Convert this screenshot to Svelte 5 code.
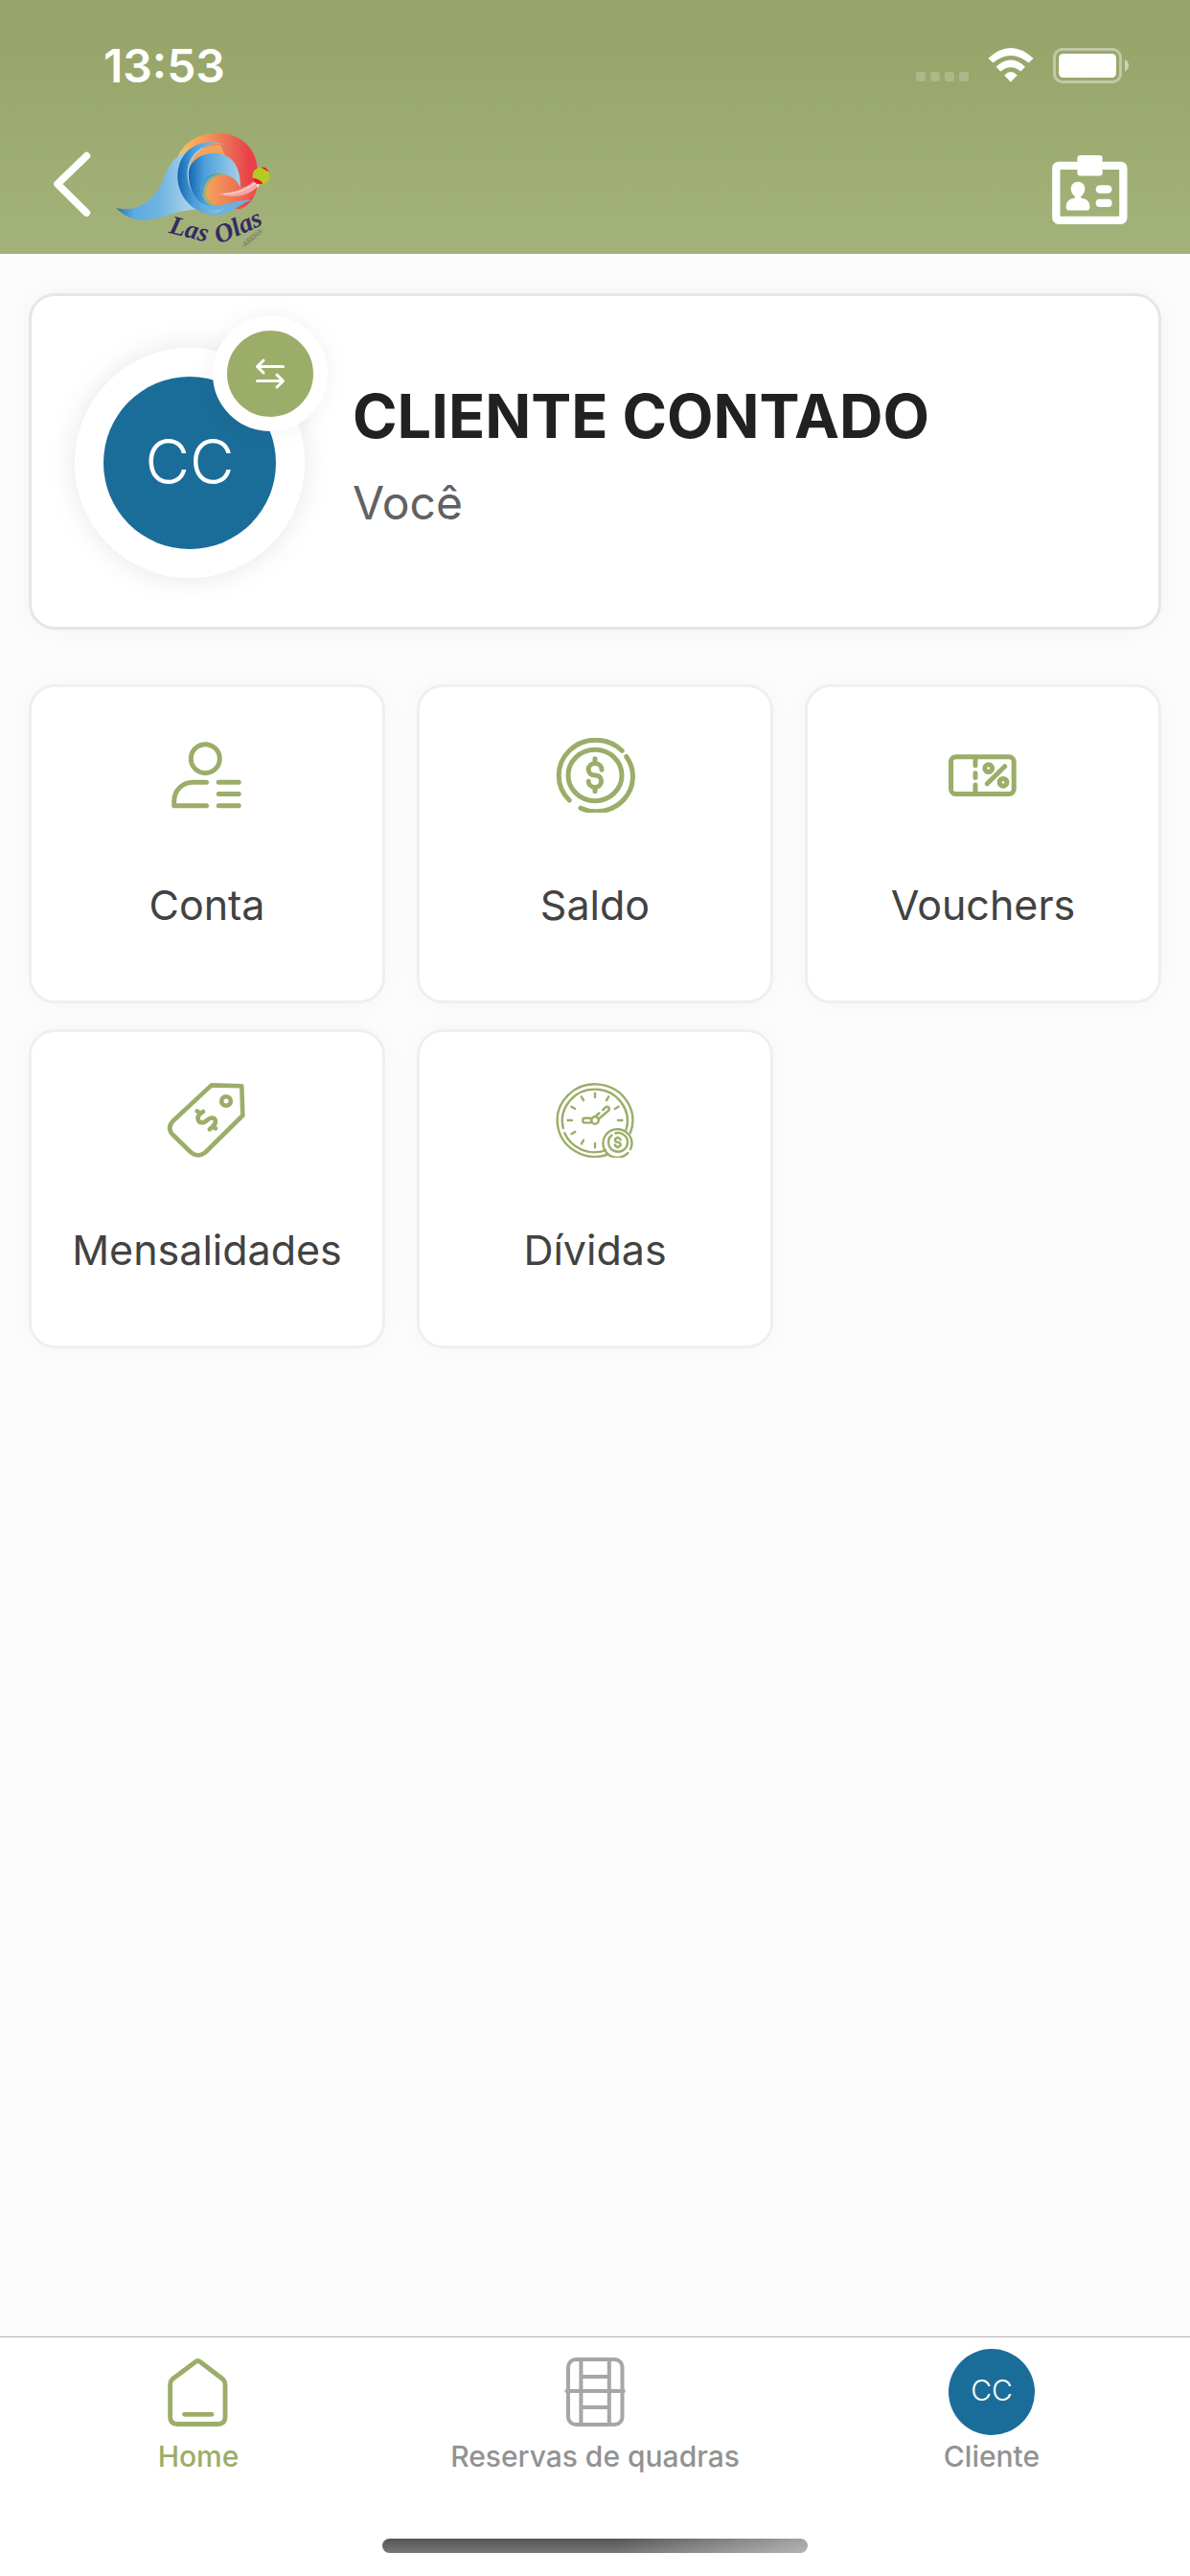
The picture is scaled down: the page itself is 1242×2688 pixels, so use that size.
<script>
  const tiles = [
    { id: 'account', label: 'Conta' },
    { id: 'balance', label: 'Saldo' },
    { id: 'voucher', label: 'Vouchers' },
    { id: 'monthly', label: 'Mensalidades' },
    { id: 'debts', label: 'Dívidas' },
  ];

  const tabs = [
    { id: 'home', label: 'Home' },
    { id: 'courts', label: 'Reservas de quadras' },
    { id: 'client', label: 'Cliente' },
  ];

  // the coin covers the marks at 4 and 5 o'clock
  const ticks = [0, 30, 60, 90, 180, 210, 240, 270, 300, 330];

  let active = 'home';
</script>

<div class="app">
  <header>
    <div class="status">
      <span class="time">13:53</span>
      <div class="indicators">
        <div class="signal"><i></i><i></i><i></i><i></i></div>
        <svg width="48" height="36" viewBox="329 147 143 109" fill="#fff">
          <path d="M329 180Q400 114 472 180L457 194Q400 148 344 194Z" />
          <path d="M354 207Q400 163 446 207L432 221Q400 195 368 221Z" />
          <path d="M380 233Q400 213 421 233L400 255Z" />
        </svg>
        <svg width="79" height="37" viewBox="531 147 237 111">
          <rect x="535.5" y="151.5" width="207" height="102" rx="25" fill="none" stroke="#fff" stroke-opacity=".4" stroke-width="9" />
          <rect x="549" y="165" width="180" height="75" rx="14" fill="#fff" />
          <path d="M756 183Q768 190 768 202T756 221Z" fill="#fff" fill-opacity=".5" />
        </svg>
      </div>
    </div>

    <div class="nav">
      <button class="back" aria-label="Voltar">
        <svg width="40" height="68" viewBox="165 473 120 204">
          <path d="M271 487L180 575L271 665" fill="none" stroke="#fff" stroke-width="23" stroke-linecap="round" stroke-linejoin="round" />
        </svg>
      </button>

      <svg class="logo" width="161" height="120" viewBox="363 415 482 360">
        <defs>
          <linearGradient id="sun" x1="0" x2="1">
            <stop offset="0" stop-color="#fdc45e" />
            <stop offset=".45" stop-color="#f08a58" />
            <stop offset=".9" stop-color="#e8404a" />
          </linearGradient>
          <linearGradient id="tail" x1="0" x2="1">
            <stop offset="0" stop-color="#1f76bd" />
            <stop offset=".2" stop-color="#5cabe0" />
            <stop offset=".5" stop-color="#70b4e0" />
            <stop offset=".8" stop-color="#a5d0ea" />
          </linearGradient>
          <linearGradient id="curl" x1="0" x2="1">
            <stop offset="0" stop-color="#1467b0" />
            <stop offset=".3" stop-color="#4d9fda" />
            <stop offset="1" stop-color="#a5d2ea" />
          </linearGradient>
          <linearGradient id="core" x1="0" x2="1">
            <stop offset="0" stop-color="#f5a35c" />
            <stop offset="1" stop-color="#ea5049" />
          </linearGradient>
        </defs>
        <path d="M556 493C572 450 620 417 680 417C750 417 804 465 805 530L803 592C796 622 777 648 750 656L700 650L752 588C752 520 700 470 610 490Z" fill="url(#sun)" />
        <path d="M363 652C420 666 465 640 498 590C517 560 520 510 568 483C590 468 610 462 640 455L590 560L640 660C570 648 530 684 450 690C415 690 385 676 363 652Z" fill="url(#tail)" />
        <path d="M592 525C604 478 640 454 690 454L705 490L640 500Z" fill="#f3a35c" />
        <path d="M708 455C660 436 598 446 569 497C544 546 555 604 592 640C625 672 660 676 690 670C720 664 738 650 720 645C676 654 622 642 597 594C571 537 592 472 651 456C675 449 692 451 708 455Z" fill="url(#curl)" />
        <path d="M590 545C590 505 630 479 674 480C722 482 754 518 752 587C735 562 715 545 684 541C645 543 622 577 632 610C638 632 655 646 682 650C640 656 590 620 590 545Z" fill="url(#curl)" />
        <path d="M645 603C646 570 672 548 703 549C728 552 744 567 750 586C778 583 795 574 805 562L803 590C798 606 790 620 778 630C748 631 727 645 712 643C674 651 645 633 645 603Z" fill="url(#core)" />
        <path d="M628 600C620 560 660 539 688 546C654 550 632 575 638 615Z" fill="#4a9cd4" />
        <path d="M620 630C660 668 735 622 786 628C745 640 720 682 652 674C670 670 688 665 702 655C670 662 635 655 620 630Z" fill="#69b2e0" />
        <path d="M680 607C730 608 770 590 795 568L811 579C780 617 725 625 680 607Z" fill="#f6a5a5" />
        <path d="M700 608C745 607 775 592 800 573" fill="none" stroke="#fbd0cd" stroke-width="4" />
        <path d="M804 577L813 578L806 588Z" fill="#fff" />
        <circle cx="817" cy="552" r="27" fill="#b6cb22" />
        <path d="M817 525C828 523 838 529 841 538C833 535 826 530 817 525ZM791 559C805 559 816 565 823 575C808 583 793 573 791 559Z" fill="#ea1c2c" />
        <text class="logo-name" transform="translate(526 729) rotate(14)">Las</text>
        <text class="logo-name" transform="translate(684 766) rotate(-24)">Olas</text>
        <text class="logo-arena" transform="translate(763 777) rotate(-40)">·ARENA·</text>
      </svg>

      <button class="badge" aria-label="Carteirinha">
        <svg width="81" height="74" viewBox="524 482 243 223" fill="#fff">
          <rect x="539.5" y="517.5" width="211" height="172" rx="8" fill="none" stroke="#fff" stroke-width="25" />
          <rect x="606" y="485" width="79" height="65" rx="10" />
          <path d="M586 591C586 577 596 569 608 569S630 577 630 591C630 601 625 608 617 615C618 620 622 621 626 621C638 624 645 633 645 645V651Q645 658 638 658H578Q571 658 571 651V645C571 633 578 624 590 621C594 621 598 620 599 615C591 608 586 601 586 591Z" />
          <rect x="664" y="579" width="51" height="26" rx="13" />
          <rect x="664" y="623" width="51" height="25" rx="12" />
        </svg>
      </button>
    </div>
  </header>

  <main>
    <section class="profile">
      <div class="picture">
        <div class="avatar">CC</div>
        <button class="swap" aria-label="Trocar cliente">
          <svg width="32" height="32" viewBox="0 0 32 32" fill="none" stroke="#fff" stroke-width="3" stroke-linecap="round" stroke-linejoin="round">
            <path d="M29.5 8.5H2.5M9 2.2L2.5 8.5L9 15" />
            <path d="M2.5 23.5H29.5M23 17.2L29.5 23.5L23 30" />
          </svg>
        </button>
      </div>
      <div class="who">
        <h1>CLIENTE CONTADO</h1>
        <p>Você</p>
      </div>
    </section>

    <div class="tiles">
      {#each tiles as tile (tile.id)}
        <button class="tile">
          <svg width="84" height="78" viewBox="0 0 84 78" fill="none" stroke="currentColor" stroke-width="5" stroke-linecap="round" stroke-linejoin="round">
            {#if tile.id === 'account'}
              <circle cx="40.3" cy="21.7" r="15" />
              <path d="M41.5 46.3H28C16 46.3 7.7 55 7.7 66V70.7H41.5" />
              <path d="M54.2 46.3H75.2M54.2 58.4H75.2M54.2 70.7H75.2" />
            {:else if tile.id === 'balance'}
              <path d="M70.2 13.3A38 36.5 0 1 0 15.2 65M74.7 19.5A38 36.5 0 0 1 27 73.2" />
              <ellipse cx="42" cy="39" rx="28" ry="26.7" />
              <path d="M49 33.3C49 29.5 46 26.6 42 26.6S35.2 29.5 35.2 33S38 39 42 39S48.6 41.5 48.6 45S46 51.4 42 51.4S35.2 48.5 35.2 45.3M42 21.8V26M42 52V55.8" />
            {:else if tile.id === 'voucher'}
              <rect x="8.5" y="19.8" width="65.7" height="38.7" rx="5" />
              <path d="M34 21V28.8M34 36.8V41.5M34 49V57M64.7 29.7L46.3 47.8" />
              <circle cx="47.7" cy="31.7" r="3.9" />
              <circle cx="63" cy="46.3" r="3.9" />
            {:else if tile.id === 'monthly'}
              <g stroke-width="4.6">
                <path d="M46.7 2.4L78.3 3.3L79.3 34L40.3 72.5Q32.7 78.5 25.3 72.5L6.3 54Q0 47.3 6.3 40Z" />
                <circle cx="62" cy="19" r="4.8" />
                <path d="M38 30C33 33 31.5 36 33 39C35 42.5 39 42 42 39C45 36 49 35.5 50.6 38.5C52 42 50 44.5 44.8 48.3M31.7 29.4L35 31.8M51 47.4L48.5 46" />
              </g>
            {:else}
              <g stroke-width="2.4">
                <path d="M78.8 52.3A39.3 37.8 0 1 0 55.5 74.6" />
                <path d="M8.8 47.3A34 33 0 1 1 74.6 48.5M10.2 52.3A34 33 0 0 0 53 70.3" />
                {#each ticks as angle}
                  <path d="M42 10.6V15" transform="rotate({angle} 42 39)" />
                {/each}
                <circle cx="42" cy="39" r="3.8" />
                <rect x="29.3" y="36.8" width="9" height="4.8" rx="2" />
                <path d="M43.5 34L46.5 31.5M50 28.3L52.8 25.7C55.5 23.5 58.4 26.6 56 29L46 37.5" />
                <path d="M79 69.3A15 14.8 0 1 0 76.3 73.2" />
                <path d="M59.5 54.5A10 9.8 0 1 0 63.3 52.5" />
                <path d="M68.6 59.4C68 57.8 67 57.4 65.7 57.4C61.9 57.4 62.2 61.4 65.7 61.9C69.8 62.4 69.5 66.6 65.7 66.6C64.2 66.6 63.2 66 62.8 64.6M65.7 56.6V57.4M65.7 66.6V67.6" />
              </g>
            {/if}
          </svg>
          <span>{tile.label}</span>
        </button>
      {/each}
    </div>
  </main>

  <footer>
    <nav>
      {#each tabs as tab (tab.id)}
        <button class="tab" class:active={tab.id === active} on:click={() => (active = tab.id)}>
          <div class="slot">
            {#if tab.id === 'home'}
              <svg width="66" height="72" viewBox="0 0 66 72" fill="none" stroke="currentColor" stroke-width="4.8" stroke-linecap="round" stroke-linejoin="round">
                <path d="M29.5 5Q32.5 2 35.5 5L58.5 22.5Q61 25 61 28V62Q61 69.5 53.5 69.5H11Q3.6 69.5 3.6 62V28Q3.6 25 6 22.5Z" />
                <path d="M18.5 59.3H47" />
              </svg>
            {:else if tab.id === 'courts'}
              <svg width="66" height="72" viewBox="0 0 66 72" fill="none" stroke="#a6a6a6" stroke-width="4" stroke-linecap="round">
                <rect x="5" y="2" width="56.5" height="68" rx="8" />
                <path d="M18.4 2V70M47.8 2V70M18.4 20H47.8M18.4 52H47.8M3.4 35H62.8" />
              </svg>
            {:else}
              <div class="avatar small">CC</div>
            {/if}
          </div>
          <span>{tab.label}</span>
        </button>
      {/each}
    </nav>
    <div class="home-bar"></div>
  </footer>
</div>

<style>
  :global(body) {
    margin: 0;
    background-color: #fcfcfc;
    font-family: Inter, 'Liberation Sans', sans-serif;
  }

  button {
    margin: 0;
    padding: 0;
    border: 0;
    background: none;
    font-family: inherit;
    cursor: pointer;
  }

  svg {
    display: block;
    flex-shrink: 0;
  }

  .app {
    min-height: 100vh;
    display: flex;
    flex-direction: column;
  }

  header {
    background: linear-gradient(#97a56a 40px, #a2b178 230px);
    border-bottom: 1px solid #aaaea0;
  }

  .status {
    height: 136px;
    display: flex;
    align-items: center;
    justify-content: space-between;
    padding: 0 64px 0 108px;
  }

  .time {
    color: #fff;
    font-size: 48px;
    font-weight: 600;
  }

  .indicators {
    display: flex;
    align-items: center;
    gap: 20px;
  }

  .signal {
    display: flex;
    gap: 5px;
    padding-top: 24px;
  }

  .signal i {
    width: 10px;
    height: 10px;
    border-radius: 3px;
    background-color: rgba(255, 255, 255, 0.2);
  }

  .nav {
    height: 124px;
    display: flex;
    align-items: center;
    padding: 0 64px 4px 55px;
  }

  .back {
    padding: 0 26px 12px 0;
  }

  .badge {
    margin-left: auto;
  }

  .logo {
    overflow: visible;
  }

  .logo-name {
    font-family: 'Liberation Serif', serif;
    font-size: 82px;
    font-style: italic;
    font-weight: 700;
    fill: #352a63;
  }

  .logo-arena {
    font-size: 21px;
    font-weight: 500;
    fill: #77786a;
  }

  main {
    flex: 1;
    display: flex;
    flex-direction: column;
    gap: 57px;
    padding: 41px 30px;
  }

  .profile {
    display: flex;
    align-items: center;
    gap: 50px;
    padding: 54px 45px 51px;
    border: 3px solid #e6e6e6;
    border-radius: 27px;
    background-color: #fff;
    box-shadow: 0 0 30px rgba(0, 0, 0, 0.04);
  }

  .picture {
    position: relative;
    border: 30px solid #fff;
    border-radius: 50%;
    box-shadow: 0 0 30px rgba(0, 0, 0, 0.1);
  }

  .avatar {
    box-sizing: border-box;
    width: 180px;
    height: 180px;
    display: flex;
    align-items: center;
    justify-content: center;
    padding-bottom: 4px;
    border-radius: 50%;
    background-color: #1b6d99;
    color: #fff;
    font-size: 64px;
    font-weight: 300;
  }

  .avatar.small {
    width: 90px;
    height: 90px;
    font-size: 30px;
  }

  .swap {
    position: absolute;
    top: -63px;
    right: -54px;
    width: 120px;
    height: 120px;
    display: flex;
    align-items: center;
    justify-content: center;
    border: 15px solid #fff;
    border-radius: 50%;
    background-color: #9bad68;
    box-shadow: 0 0 24px rgba(0, 0, 0, 0.06);
  }

  .who {
    display: flex;
    flex-direction: column;
    gap: 23px;
    padding-bottom: 16px;
  }

  h1 {
    margin: 0;
    color: #212121;
    font-size: 63px;
    font-weight: 700;
    line-height: 76px;
  }

  p {
    margin: 0;
    color: #616161;
    font-size: 48px;
    line-height: 60px;
  }

  .tiles {
    display: grid;
    grid-template-columns: repeat(3, 1fr);
    gap: 27px 33px;
  }

  .tile {
    display: flex;
    flex-direction: column;
    align-items: center;
    gap: 70px;
    padding: 53px 0 74px;
    border: 3px solid #efefef;
    border-radius: 27px;
    background-color: #fff;
    box-shadow: 0 0 30px rgba(0, 0, 0, 0.03);
    color: #9bad68;
  }

  .tile span {
    color: #424242;
    font-size: 43px;
    line-height: 52px;
  }

  footer {
    border-top: 1px solid #b0b0b0;
    background-color: #fff;
    padding: 12px 0 24px;
  }

  nav {
    display: grid;
    grid-template-columns: repeat(3, 1fr);
  }

  .tab {
    display: flex;
    flex-direction: column;
    align-items: center;
    gap: 4px;
    color: #929292;
    font-size: 30px;
    font-weight: 500;
    line-height: 36px;
  }

  .tab.active {
    color: #9bad68;
  }

  .slot {
    height: 90px;
    display: flex;
    align-items: center;
  }

  .home-bar {
    width: 444px;
    height: 15px;
    margin: 68px auto 0;
    border-radius: 8px;
    background:
      linear-gradient(90deg, transparent 55%, rgba(255, 255, 255, 0.45)),
      linear-gradient(#555, #777);
  }
</style>
